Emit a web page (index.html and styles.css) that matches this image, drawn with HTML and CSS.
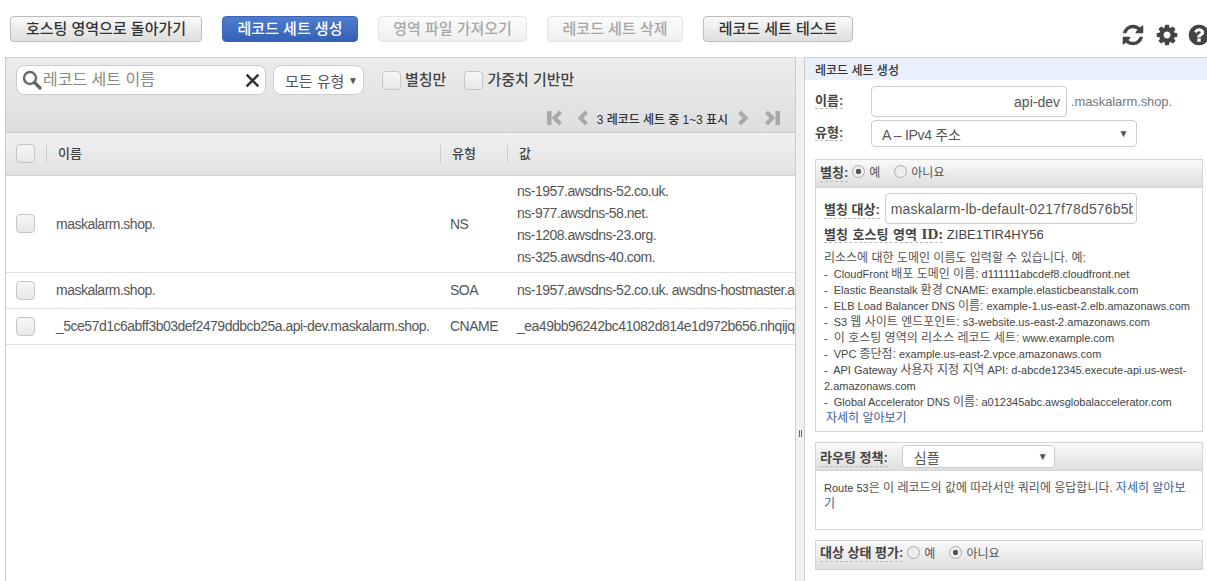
FILE: index.html
```html
<!DOCTYPE html>
<html>
  <head>
    <meta charset="utf-8">
    <link rel="stylesheet" href="styles.css">
  </head>

  <body>
    <!-- top buttons -->
    <div class="toolbar">
      <button class="btn btn-back">호스팅 영역으로 돌아가기</button>
      <button class="btn btn-primary">레코드 세트 생성</button>
      <button class="btn btn-import" disabled>영역 파일 가져오기</button>
      <button class="btn btn-delete" disabled>레코드 세트 삭제</button>
      <button class="btn btn-test">레코드 세트 테스트</button>
      <div class="tool-icons">
        <svg class="tool-icon" viewBox="0 0 1792 1792"><path d="M1639 1056q0 5-1 7-64 268-268 434.5t-478 166.5q-146 0-282.5-55t-243.5-157l-129 129q-19 19-45 19t-45-19-19-45v-448q0-26 19-45t45-19h448q26 0 45 19t19 45-19 45l-137 137q71 66 161 102t187 36q134 0 250-65t186-179q11-17 53-117 8-23 30-23h192q13 0 22.5 9.5t9.5 22.5zm25-800v448q0 26-19 45t-45 19h-448q-26 0-45-19t-19-45 19-45l138-138q-148-137-349-137-134 0-250 65t-186 179q-11 17-53 117-8 23-30 23h-199q-13 0-22.5-9.5t-9.5-22.5v-7q65-268 270-434.5t480-166.5q146 0 284 55.5t245 156.5l130-129q19-19 45-19t45 19 19 45z"/></svg>
        <svg class="tool-icon" viewBox="0 0 1792 1792"><path d="M1152 896q0-106-75-181t-181-75-181 75-75 181 75 181 181 75 181-75 75-181zm512-109v222q0 12-8 23t-20 13l-185 28q-19 54-39 91 35 50 107 138 10 12 10 25t-9 23q-27 37-99 108t-94 71q-12 0-26-9l-138-108q-44 23-91 38-16 136-29 186-7 28-36 28h-222q-14 0-24.5-8.5t-11.5-21.5l-28-184q-49-16-90-37l-141 107q-10 9-25 9-14 0-25-11-126-114-165-168-7-10-7-23 0-12 8-23 15-21 51-66.5t54-70.5q-27-50-41-99l-183-27q-13-2-21-12.5t-8-23.5v-222q0-12 8-23t19-13l186-28q14-46 39-92-40-57-107-138-10-12-10-24 0-10 9-23 26-36 98.5-107.5t94.5-71.5q13 0 26 10l138 107q44-23 91-38 16-136 29-186 7-28 36-28h222q14 0 24.5 8.5t11.5 21.5l28 184q49 16 90 37l142-107q9-9 24-9 13 0 25 10 129 119 165 170 7 8 7 22 0 12-8 23-15 21-51 66.5t-54 70.5q26 50 41 98l183 28q13 2 21 12.5t8 23.5z"/></svg>
        <svg class="tool-icon" viewBox="0 0 1792 1792"><path d="M1024 1376v-192q0-14-9-23t-23-9h-192q-14 0-23 9t-9 23v192q0 14 9 23t23 9h192q14 0 23-9t9-23zm256-672q0-88-55.5-163t-138.5-116-170-41q-243 0-371 213-15 24 8 42l132 100q7 6 19 6 16 0 25-12 53-68 86-92 34-24 86-24 48 0 85.5 26t37.5 59q0 38-20 61t-68 45q-63 28-115.5 86.5t-52.5 125.5v36q0 14 9 23t23 9h192q14 0 23-9t9-23q0-19 21.5-49.5t54.5-49.5q32-18 49-28.5t46-35 44.5-48 28-60.5 12.5-81zm384 192q0 209-103 385.5t-279.5 279.5-385.5 103-385.5-103-279.5-279.5-103-385.5 103-385.5 279.5-279.5 385.5-103 385.5 103 279.5 279.5 103 385.5z"/></svg>
      </div>
    </div>

    <div class="main">
      <!-- record list -->
      <div class="list-panel">
        <div class="filters">
          <div class="filter-row">
            <div class="search">
              <svg class="search-icon" viewBox="0 0 20 20"><circle cx="8" cy="8" r="6" fill="none" stroke="#666" stroke-width="2.4"/><path d="M12.5 12.5l5.5 5.5" stroke="#666" stroke-width="3.2" stroke-linecap="round"/></svg>
              <span class="search-text">레코드 세트 이름</span>
              <svg class="search-clear" viewBox="0 0 14 14"><path d="M1.5 1.5l11 11M12.5 1.5l-11 11" stroke="#333" stroke-width="2.4"/></svg>
            </div>
            <div class="type-filter">모든 유형<span class="caret">▼</span></div>
            <label class="check-label check-alias"><input type="checkbox" class="check"><span class="check-text">별칭만</span></label>
            <label class="check-label"><input type="checkbox" class="check"><span class="check-text">가중치 기반만</span></label>
          </div>
          <div class="pager">
            <svg class="pager-icon pager-edge" viewBox="0 0 16 16"><path d="M0 1h4.5v14H0z"/><path class="chevron" d="M13.5 2L7.5 8l6 6"/></svg>
            <svg class="pager-icon pager-step pager-prev" viewBox="0 0 12 16"><path class="chevron" d="M9.5 2L3.5 8l6 6"/></svg>
            <span class="pager-text">3 레코드 세트 중 1~3 표시</span>
            <svg class="pager-icon pager-step pager-next" viewBox="0 0 12 16"><path class="chevron" d="M2.5 2l6 6-6 6"/></svg>
            <svg class="pager-icon pager-edge" viewBox="0 0 16 16"><path d="M11.5 1H16v14h-4.500z"/><path class="chevron" d="M2.500 2l6 6-6 6"/></svg>
          </div>
        </div>

        <table class="records">
          <tr class="head-row">
            <th class="col-check"><input type="checkbox" class="check"></th>
            <th class="col-name"><span class="th-text">이름</span></th>
            <th class="col-type"><span class="th-text">유형</span></th>
            <th class="col-value"><span class="th-text">값</span></th>
          </tr>
          <tr class="row-ns">
            <td class="col-check"><input type="checkbox" class="check"></td>
            <td>maskalarm.shop.</td>
            <td>NS</td>
            <td class="values">
              <div>ns-1957.awsdns-52.co.uk.</div>
              <div>ns-977.awsdns-58.net.</div>
              <div>ns-1208.awsdns-23.org.</div>
              <div>ns-325.awsdns-40.com.</div>
            </td>
          </tr>
          <tr>
            <td class="col-check"><input type="checkbox" class="check"></td>
            <td>maskalarm.shop.</td>
            <td>SOA</td>
            <td class="values">ns-1957.awsdns-52.co.uk. awsdns-hostmaster.amazon.com. 1 7200 900 1209600 86400</td>
          </tr>
          <tr>
            <td class="col-check"><input type="checkbox" class="check"></td>
            <td>_5ce57d1c6abff3b03def2479ddbcb25a.api-dev.maskalarm.shop.</td>
            <td>CNAME</td>
            <td class="values">_ea49bb96242bc41082d814e1d972b656.nhqijqilxf.acm-validations.aws.</td>
          </tr>
        </table>
      </div>

      <!-- splitter -->
      <div class="splitter"><span class="grip"></span></div>

      <!-- create record form -->
      <div class="form-panel">
        <div class="form-title">레코드 세트 생성</div>

        <div class="form-row row-name">
          <span class="field-label"><span class="dashed">이름:</span></span>
          <div class="input input-name">api-dev</div>
          <span class="suffix">.maskalarm.shop.</span>
        </div>
        <div class="form-row row-kind">
          <span class="field-label"><span class="dashed">유형:</span></span>
          <div class="input input-kind">A – IPv4 주소<span class="caret">▼</span></div>
        </div>

        <div class="section section-alias">
          <div class="section-head">
            <span class="dashed">별칭:</span>
            <input type="radio" class="radio" name="alias" checked><span class="radio-text">예</span>
            <input type="radio" class="radio radio-second" name="alias"><span class="radio-text">아니요</span>
          </div>
          <div class="section-body">
            <div class="alias-target">
              <span class="dashed">별칭 대상:</span>
              <div class="input input-target"><span class="target-text">maskalarm-lb-default-0217f78d576b5b7a.elb.us-east-2.amazonaws.com</span></div>
            </div>
            <div class="alias-zone"><span class="dashed zone-label">별칭 호스팅 영역 <span class="serif">ID:</span></span> ZIBE1TIR4HY56</div>
            <div class="help">
              <p><span class="ko">리소스에 대한 도메인 이름도 입력할 수 있습니다. 예:</span></p>
              <p>-&nbsp; CloudFront <span class="ko">배포 도메인 이름:</span> d111111abcdef8.cloudfront.net</p>
              <p>-&nbsp; Elastic Beanstalk <span class="ko">환경</span> CNAME: example.elasticbeanstalk.com</p>
              <p>-&nbsp; ELB Load Balancer DNS <span class="ko">이름:</span> example-1.us-east-2.elb.amazonaws.com</p>
              <p>-&nbsp; S3 <span class="ko">웹 사이트 엔드포인트:</span> s3-website.us-east-2.amazonaws.com</p>
              <p>-&nbsp; <span class="ko">이 호스팅 영역의 리소스 레코드 세트:</span> www.example.com</p>
              <p>-&nbsp; VPC <span class="ko">종단점:</span> example.us-east-2.vpce.amazonaws.com</p>
              <p>-&nbsp; API Gateway <span class="ko">사용자 지정 지역</span> API: d-abcde12345.execute-api.us-west-2.amazonaws.com</p>
              <p>-&nbsp; Global Accelerator DNS <span class="ko">이름:</span> a012345abc.awsglobalaccelerator.com</p>
              <p class="more"><a class="link ko">자세히 알아보기</a></p>
            </div>
          </div>
        </div>

        <div class="section section-routing">
          <div class="section-head">
            <span class="dashed">라우팅 정책:</span>
            <div class="input input-policy">심플<span class="caret">▼</span></div>
          </div>
          <div class="section-body routing-body">Route 53<span class="ko">은 이 레코드의 값에 따라서만 쿼리에 응답합니다.</span> <a class="link ko">자세히 알아보기</a></div>
        </div>

        <div class="section section-health">
          <div class="section-head">
            <span class="dashed">대상 상태 평가:</span>
            <input type="radio" class="radio" name="health"><span class="radio-text">예</span>
            <input type="radio" class="radio radio-second" name="health" checked><span class="radio-text">아니요</span>
          </div>
        </div>
      </div>
    </div>
  </body>
</html>
```

FILE: styles.css
```css
* {
  box-sizing: border-box;
}

body {
  margin: 0;
  height: 581px;
  overflow: hidden;
  background: #fff;
  color: #444;
  font-family: "Liberation Sans", "Noto Sans CJK KR", sans-serif;
  font-size: 12px;
}

/* toolbar */

.toolbar {
  display: flex;
  align-items: flex-start;
  height: 57px;
  padding: 16px 0 0 10px;
}

.btn {
  flex: none;
  height: 26px;
  padding: 0 0 3px;
  margin-right: 20px;
  border: 1px solid #bdbdbd;
  border-radius: 4px;
  background: linear-gradient(#fafafa, #dedede);
  color: #333;
  font-family: inherit;
  font-size: 15px;
  font-weight: 500;
}

.btn-back { width: 192px; }
.btn-primary {
  width: 136px;
  border-color: #3a66b5;
  background: linear-gradient(#4f7ccc, #3461b5);
  color: #fff;
}
.btn-import { width: 149px; }
.btn-delete { width: 136px; }
.btn-test { width: 150px; }

.btn:disabled {
  border-color: #e4e4e4;
  background: linear-gradient(#fbfbfb, #efefef);
  color: #a6a6a6;
}

.tool-icons {
  display: flex;
  flex: none;
  margin-left: 248px;
  margin-top: 7px;
}

.tool-icon {
  flex: none;
  width: 24px;
  height: 24px;
  margin-right: 10px;
  fill: #444;
}

.tool-icon + .tool-icon + .tool-icon {
  margin-left: -2px;
}

/* main area */

.main {
  display: flex;
  height: 524px;
  padding-left: 5px;
}

.list-panel {
  width: 791px;
  flex: none;
  overflow: hidden;
  border-top: 1px solid #cfcfcf;
  border-left: 1px solid #ccc;
  border-right: 1px solid #ccc;
}

.filters {
  height: 75px;
  padding: 7px 0 0 10px;
  background: linear-gradient(#ececec, #dedede);
  border-bottom: 1px solid #c9c9c9;
}

.filter-row {
  display: flex;
  align-items: center;
  height: 30px;
}

.search {
  display: flex;
  align-items: center;
  width: 250px;
  height: 30px;
  padding: 0 5px 0 5px;
  background: #fff;
  border: 1px solid #ccc;
  border-radius: 8px;
}

.search-icon {
  width: 20px;
  height: 20px;
  flex: none;
}

.search-text {
  flex: 1;
  margin-left: 1px;
  padding-bottom: 4px;
  color: #888;
  font-size: 16px;
}

.search-clear {
  width: 15px;
  height: 15px;
  flex: none;
}

.type-filter {
  display: flex;
  align-items: center;
  width: 91px;
  height: 30px;
  margin-left: 7px;
  padding-left: 11px;
  background: #fff;
  border: 1px solid #ccc;
  border-radius: 8px;
  font-size: 15px;
  color: #555;
}

.caret {
  margin-left: auto;
  font-size: 10px;
  color: #555;
}

.type-filter .caret {
  margin-right: 5px;
}

.check {
  appearance: none;
  display: block;
  flex: none;
  width: 19px;
  height: 19px;
  margin: 0;
  background: linear-gradient(#f6f6f6, #e8e8e8);
  border: 1px solid #c6c6c6;
  border-radius: 4px;
}

.check-label {
  display: flex;
  align-items: center;
  gap: 4px;
  margin-right: 18px;
  font-size: 15px;
  font-weight: 500;
  color: #444;
}

.check-text {
  padding-bottom: 4px;
}

.check-alias {
  margin-left: 18px;
}

.pager {
  display: flex;
  align-items: center;
  justify-content: flex-end;
  height: 24px;
  margin-top: 11px;
  padding-right: 15px;
  color: #333;
}

.pager-text {
  margin: 0 9px 0 8px;
  font-size: 12px;
  font-weight: 500;
  letter-spacing: -0.05px;
}

.pager-icon {
  height: 16px;
  flex: none;
  fill: #a9a9a9;
}

.pager-edge {
  width: 16px;
}

.pager-step {
  width: 12px;
}

.chevron {
  fill: none;
  stroke: #a9a9a9;
  stroke-width: 4;
}

.pager-prev {
  margin-left: 14px;
}

.pager-next {
  margin-right: 15px;
}

/* record table */

.records {
  width: 790px;
  table-layout: fixed;
  border-collapse: collapse;
  font-size: 14px;
}

.records td,
.records th {
  padding: 0;
  white-space: nowrap;
  overflow: hidden;
  text-align: left;
  font-weight: normal;
}

.records td {
  height: 36px;
  border-bottom: 1px solid #ddd;
  letter-spacing: -0.5px;
  color: #555;
}

.head-row th {
  height: 42px;
  background: linear-gradient(#f1f1f1, #e2e2e2);
  border-bottom: 1px solid #cfcfcf;
  color: #444;
  font-size: 13px;
  font-weight: 500;
}

.th-text {
  display: block;
  height: 18px;
  line-height: 18px;
  padding-left: 11px;
  border-left: 1px solid #c9c9c9;
}

.col-check { width: 40px; padding-left: 10px !important; }
.col-name { width: 394px; }
.col-type { width: 67px; }
.records td:nth-child(2) { padding-left: 10px; }
.records td:nth-child(3) { padding-left: 10px; }
.records td:nth-child(4) { padding-left: 10px; }

.row-ns td {
  height: 97px;
}

.values div {
  height: 22px;
  line-height: 22px;
}

/* splitter */

.splitter {
  display: flex;
  align-items: flex-start;
  justify-content: center;
  width: 8px;
  flex: none;
  background: #f0f0f0;
}

.grip {
  display: block;
  width: 3px;
  height: 7px;
  margin-top: 373px;
  border-left: 1px solid #666;
  border-right: 1px solid #666;
}

/* form */

.form-panel {
  flex: 1;
  min-width: 0;
  border-top: 1px solid #cfcfcf;
  border-left: 1px solid #ccc;
}

.form-title {
  height: 22px;
  padding-left: 10px;
  line-height: 26px;
  background: #e9f0fb;
  font-size: 12px;
  font-weight: 500;
  color: #333;
}

.form-row {
  display: flex;
  align-items: center;
  padding-left: 10px;
}

.row-name {
  height: 31px;
  margin-top: 6px;
}

.row-kind {
  height: 27px;
  margin-top: 3px;
}

.field-label {
  width: 56px;
  flex: none;
  padding-bottom: 4px;
  font-size: 13px;
  font-weight: 700;
  color: #444;
}

.dashed {
  border-bottom: 1px dashed #bbb;
  font-size: 13px;
  font-weight: 700;
  color: #444;
}

.input {
  display: flex;
  align-items: center;
  background: #fff;
  border: 1px solid #ccc;
  border-radius: 4px;
  color: #555;
  font-size: 14px;
}

.input-name {
  justify-content: flex-end;
  width: 196px;
  height: 31px;
  padding-right: 6px;
}

.suffix {
  margin-left: 4px;
  color: #777;
  font-size: 13px;
  letter-spacing: -0.1px;
}

.input-kind {
  width: 266px;
  height: 27px;
  padding: 0 8px 0 10px;
  letter-spacing: -0.3px;
}

.section {
  margin: 0 4px 0 10px;
  border: 1px solid #d5d5d5;
}

.section-head {
  display: flex;
  align-items: center;
  height: 28px;
  padding: 0 0 4px 4px;
  background: linear-gradient(#fafafa, #dedede);
  border-bottom: 1px solid #d5d5d5;
}

.section-alias {
  height: 273px;
  margin-top: 12px;
}

.section-routing {
  height: 88px;
  margin-top: 10px;
}

.section-routing .section-head {
  padding-bottom: 0;
}

.section-health {
  height: 30px;
  margin-top: 10px;
}

.section-health .section-head {
  height: 28px;
  padding-bottom: 6px;
  border-bottom: 0;
}

.section-body {
  padding: 0 8px;
}

.radio {
  appearance: none;
  flex: none;
  width: 13px;
  height: 13px;
  margin: 0 0 0 4px;
  background: #eee;
  border: 1px solid #aaa;
  border-radius: 50%;
}

.radio:checked {
  background: radial-gradient(circle, #555 0, #555 2.5px, #eee 3px);
}

.radio-second {
  margin-left: 14px;
}

.radio-text {
  margin-left: 4px;
  font-size: 12px;
  color: #555;
}

.alias-target {
  display: flex;
  align-items: center;
  gap: 5px;
  height: 31px;
  margin-top: 5px;
}

.input-target {
  width: 252px;
  height: 31px;
  padding: 0 3px 0 5px;
}

.target-text {
  flex: 1;
  overflow: hidden;
  white-space: nowrap;
  letter-spacing: 0.15px;
}

.alias-zone {
  margin-top: 2px;
  height: 17px;
  line-height: 17px;
  font-size: 13px;
  color: #444;
}

.zone-label {
  word-spacing: 1px;
}

.serif {
  font-family: "Liberation Serif", serif;
  font-size: 15px;
}

.help {
  margin-top: 7px;
  font-size: 11px;
  line-height: 16px;
  color: #444;
}

.help p {
  margin: 0;
}

.ko {
  font-size: 12px;
  color: #555;
}

.more {
  padding-left: 2px;
}

.link {
  color: #3b5d9c;
}

.input-policy {
  width: 153px;
  height: 23px;
  margin-left: 14px;
  padding: 0 6px 0 11px;
}

.routing-body {
  padding-top: 9px;
  font-size: 11px;
  line-height: 16px;
}
```
